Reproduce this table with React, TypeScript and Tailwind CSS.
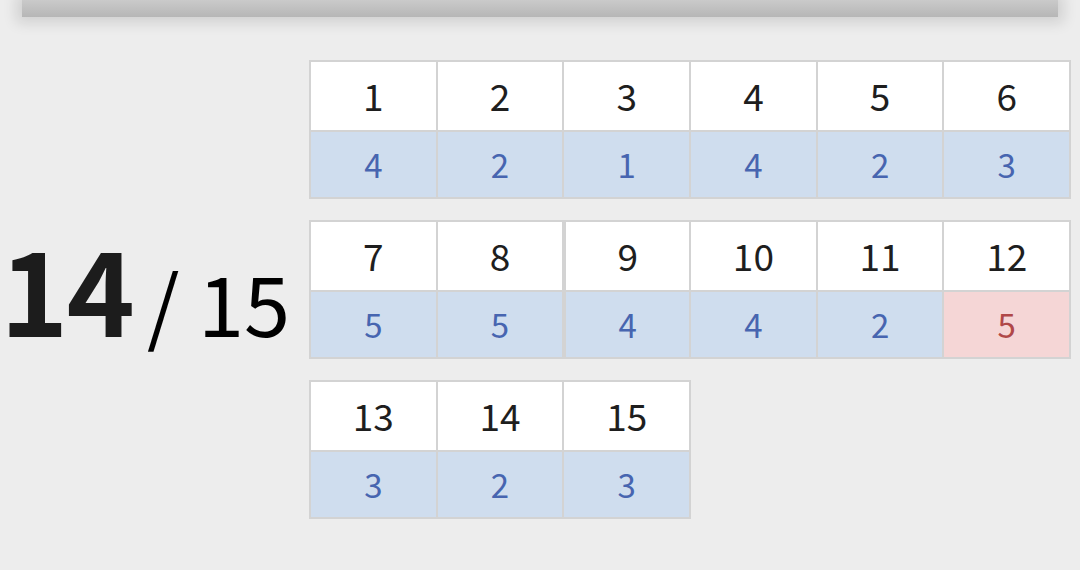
type Cell = { n: number; score: number; wrong?: boolean };

const rows: Cell[][] = [
  [
    { n: 1, score: 4 },
    { n: 2, score: 2 },
    { n: 3, score: 1 },
    { n: 4, score: 4 },
    { n: 5, score: 2 },
    { n: 6, score: 3 },
  ],
  [
    { n: 7, score: 5 },
    { n: 8, score: 5 },
    { n: 9, score: 4 },
    { n: 10, score: 4 },
    { n: 11, score: 2 },
    { n: 12, score: 5, wrong: true },
  ],
  [
    { n: 13, score: 3 },
    { n: 14, score: 2 },
    { n: 15, score: 3 },
  ],
];

function ScoreTable({ cells }: { cells: Cell[] }) {
  return (
    <div className="flex self-start bg-[#d3d3d3] p-[2px] gap-[2px]">
      {cells.map((c) => (
        <div
          key={c.n}
          className={`flex flex-col gap-[2px] w-[124.7px] ${
            c.n === 9 ? "border-l-2 border-[#d3d3d3]" : ""
          }`}
        >
          <div className="h-[68px] bg-white flex items-center justify-center text-[37px] text-[#1e1e1e]">
            {c.n}
          </div>
          <div
            className={`h-[65px] flex items-center justify-center text-[33px] ${
              c.wrong ? "bg-[#f5d6d6] text-[#b04848]" : "bg-[#cfddee] text-[#4765b0]"
            }`}
          >
            {c.score}
          </div>
        </div>
      ))}
    </div>
  );
}

export default function App() {
  return (
    <div className="w-[1080px] h-[570px] bg-[#ededed] overflow-hidden font-['Noto_Sans_CJK_KR','Noto_Sans',sans-serif]">
      {/* top bar shadow */}
      <div className="mx-[22px] h-[17px] bg-gradient-to-b from-[#cacaca] to-[#b6b6b6] shadow-[0_0_14px_6px_rgba(0,0,0,0.12)]" />

      <div className="flex items-center mt-[43px]">
        <div className="w-[309px] flex items-baseline pb-[8px] leading-none text-[#1c1c1c]">
          <span className="text-[116px] font-bold tracking-[-2px]">14</span>
          <span className="text-[83px] ml-[14px] text-black">/ 15</span>
        </div>

        <div className="flex flex-col gap-[21px]">
          {rows.map((r, i) => (
            <ScoreTable key={i} cells={r} />
          ))}
        </div>
      </div>
    </div>
  );
}
